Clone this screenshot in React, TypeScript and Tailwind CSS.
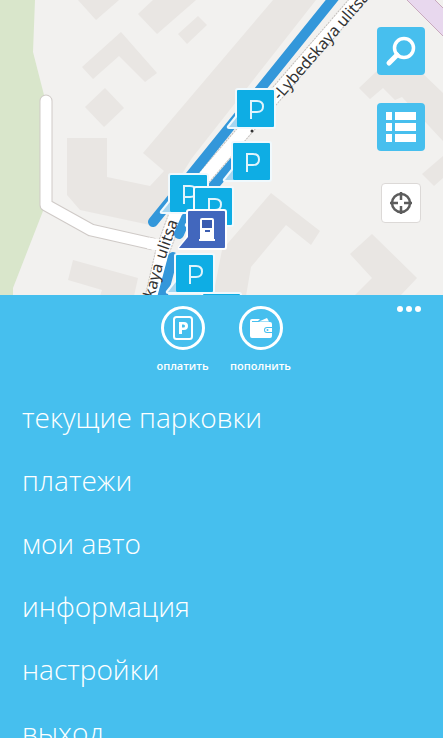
import { ReactNode, useState } from "react";

type Pin = {
  id: number;
  kind: "parking" | "machine";
  left: number;
  top: number;
};

// left/top is the corner of the svg box, the square itself starts 11px in
const PINS: Pin[] = [
  { id: 1, kind: "parking", left: 226, top: 87 },
  { id: 2, kind: "parking", left: 222, top: 140 },
  { id: 3, kind: "parking", left: 159, top: 172 },
  { id: 4, kind: "parking", left: 184, top: 185 },
  { id: 5, kind: "machine", left: 177, top: 208 },
  { id: 6, kind: "parking", left: 165, top: 252 },
  { id: 7, kind: "parking", left: 192, top: 291 },
];

const MENU = [
  { href: "#parkings", label: "текущие парковки" },
  { href: "#payments", label: "платежи" },
  { href: "#cars", label: "мои авто" },
  { href: "#info", label: "информация" },
  { href: "#settings", label: "настройки" },
  { href: "#logout", label: "выход" },
];

const STREET = "M368 -12 L207 174 L188 196 L175 217 L163 250 L151 302";
const LANE = "M46 101 V205 L91 230 L166 247";

function MapCanvas() {
  return (
    <svg className="block h-full w-full" aria-hidden="true">
      <path d="M0 0H35L33 52L44 95V205L43 211L13 288V296H0Z" fill="#d9e6cb" />

      <g fill="#e9e6e3">
        <path d="M78 0L96 20L119 0Z" />
        <path d="M138 14L153 0H196L157 34Z" />
        <path d="M178 34L198 16L207 25L187 44Z" />
        <path d="M82 67L121 32L157 73L145 82L119 56L93 79Z" />
        <path d="M105 88L124 108L104 127L85 107Z" />
        <path d="M67 138H107V177L150 186L164 171L143 153L273 0H316L192 158L150 225L80 210L67 195Z" />
        <path d="M73 260L138 278L134 296H100L102 290L68 280Z" />
        <path d="M271 193L320 231L311 245L286 225L251 267L246 296H213L222 250Z" />
        <path d="M372 234L417 278L400 296H354L372 278L350 254Z" />
        <path d="M422 174L434 186L443 178V156Z" />
        <path d="M359 88L377 71H420L443 93V141L402 97L395 100L383 88L370 99Z" />
      </g>

      <path d="M406 -1L443 36V8L434 -1Z" fill="#e8d8ee" />
      <path d="M406 -1L443 36M434 -1L443 8" fill="none" stroke="#c9a9bd" />

      {/* side lane */}
      <g fill="none" strokeLinecap="round" strokeLinejoin="round">
        <path d={LANE} stroke="#cfcac7" strokeWidth="13" />
        <path d={LANE} stroke="#fff" strokeWidth="11" />
      </g>

      {/* main street */}
      <g fill="none" strokeLinejoin="round">
        <path d={STREET} stroke="#f2f1ef" strokeWidth="22" />
        <path d={STREET} stroke="#c4c0bd" strokeWidth="15" strokeDasharray="2 1" />
        <path d={STREET} stroke="#fff" strokeWidth="13" />
        <path d="M148 243L168 247" stroke="#fff" strokeWidth="11" />
      </g>

      {/* paid parking zones */}
      <g fill="none" stroke="#3397da" strokeWidth="10" strokeLinecap="round" strokeLinejoin="round">
        <path d="M337 -6L195 170L153 222" />
        <path d="M240 155L186 218L179 234" />
        <path d="M173 257L161 302" />
      </g>

      <g fill="#333" fontFamily="'Noto Sans', 'Open Sans', sans-serif" fontSize="16">
        <text transform="translate(280 101) rotate(-49)">-Lybedskaya ulitsa</text>
        <text transform="translate(152 306) rotate(-75)">skaya</text>
        <text transform="translate(165 260) rotate(-71)">ulitsa</text>
        <circle cx="252" cy="131" r="1.5" />
      </g>
    </svg>
  );
}

function MapPin({ pin }: { pin: Pin }) {
  const machine = pin.kind === "machine";

  return (
    <button
      type="button"
      aria-label={machine ? "Паркомат" : "Парковка"}
      className="absolute"
      style={{ left: pin.left, top: pin.top }}
    >
      <svg width="51" height="43" viewBox="0 0 51 43">
        <path
          d="M12 1H47Q50 1 50 4V39Q50 42 47 42H3Q0 42 1 39L9 29V4Q9 1 12 1Z"
          fill={machine ? "#fff" : "#f0f9fd"}
        />
        <path d="M11 30L3 40H11Z" fill={machine ? "#4267bd" : "#a5d6f1"} />
        <rect x="11" y="3" width="37" height="37" rx="1" fill={machine ? "#4267bd" : "#0eade4"} />
        {machine ? (
          <>
            <path d="M11 29L2 40H12Z" fill="#4267bd" />
            <path d="M25 10H35Q37 10 37 12V31H38V33H22V31H23V12Q23 10 25 10Z" fill="#fff" />
            <rect x="25" y="12" width="10" height="8" fill="#3a5cb0" />
            <rect x="28" y="22" width="5" height="2" fill="#3a5cb0" />
          </>
        ) : (
          <path
            d="M25 32V14H31Q37 14 37 19.500Q37 25 31 25H25"
            fill="none"
            stroke="#dff4fc"
            strokeWidth="2"
          />
        )}
      </svg>
    </button>
  );
}

function MapButton({ label, children }: { label: string; children: ReactNode }) {
  return (
    <button
      type="button"
      aria-label={label}
      className="flex size-12 items-center justify-center rounded bg-[#47bfee]"
    >
      {children}
    </button>
  );
}

function RoundAction({ label, children }: { label: string; children: ReactNode }) {
  return (
    <button type="button" className="flex w-[78px] flex-col items-center gap-2">
      <span className="flex size-11 items-center justify-center rounded-full border-[3px] border-white">
        {children}
      </span>
      <span className="text-[11px] leading-4 font-semibold">{label}</span>
    </button>
  );
}

export default function App() {
  const [open, setOpen] = useState(true);

  return (
    <main className="flex h-screen flex-col overflow-hidden bg-[#46bfee] font-['Open_Sans','Noto_Sans',sans-serif] text-white">
      <section className="relative h-[295px] shrink-0 overflow-hidden bg-[#f2f1ef]">
        <MapCanvas />

        {PINS.map((pin) => (
          <MapPin key={pin.id} pin={pin} />
        ))}

        <div className="absolute top-[27px] right-[18px] flex flex-col items-center">
          <MapButton label="Поиск">
            <svg width="32" height="32" viewBox="0 0 32 32" fill="none" stroke="#fff">
              <circle cx="19" cy="13" r="9.500" strokeWidth="3.500" />
              <path d="M12 20L4 28" strokeWidth="5" strokeLinecap="round" />
            </svg>
          </MapButton>
          <div className="mt-7 mb-8">
            <MapButton label="Список">
              <svg width="30" height="30" viewBox="0 0 30 30" fill="#fff">
                <path d="M0 0H6V8H0ZM9 0H30V8H9ZM0 11H6V19H0ZM9 11H30V19H9ZM0 22H6V30H0ZM9 22H30V30H9Z" />
              </svg>
            </MapButton>
          </div>
          <button
            type="button"
            aria-label="Моё местоположение"
            className="flex size-10 items-center justify-center rounded-sm border border-[#dcd9d7] bg-white"
          >
            <svg width="24" height="24" viewBox="0 0 24 24" fill="none" stroke="#5c5c5c" strokeWidth="2.500">
              <circle cx="12" cy="12" r="9" />
              <path d="M12 1V9M12 15V23M1 12H9M15 12H23" />
            </svg>
          </button>
        </div>
      </section>

      <section className="flex min-h-0 flex-1 flex-col">
        <div className="grid grid-cols-[1fr_auto_1fr] items-start pt-[11px]">
          <div className="col-start-2 flex">
            <RoundAction label="оплатить">
              <svg width="20" height="24" viewBox="0 0 20 24">
                <rect x="1" y="1" width="18" height="22" rx="2.500" fill="none" stroke="#fff" strokeWidth="2" />
                <path
                  fillRule="evenodd"
                  fill="#fff"
                  d="M6 6H11Q15 6 15 10Q15 14 11 14H9V18H6ZM9 8.500V11.500H10.500Q12 11.500 12 10Q12 8.500 10.500 8.500Z"
                />
              </svg>
            </RoundAction>
            <RoundAction label="пополнить">
              <svg width="24" height="20" viewBox="0 0 24 20">
                <path
                  fill="#fff"
                  d="M1 3Q1 1 3 1H11L9 3H3V4H21Q23 4 23 6V9H18Q15 9 15 12Q15 15 18 15H23V18Q23 20 21 20H3Q1 20 1 18Z"
                />
                <path d="M10 3.500L18 0L20 3.500Z" fill="#fff" />
                <path d="M18 10H23V14H18Q16 14 16 12Q16 10 18 10Z" fill="#fff" />
                <circle cx="18.500" cy="12" r="1" fill="#46bfee" />
              </svg>
            </RoundAction>
          </div>
          <button
            type="button"
            aria-label="Ещё"
            aria-expanded={open}
            onClick={() => setOpen(!open)}
            className="mr-[22px] flex gap-[3px] justify-self-end"
          >
            <span className="size-1.5 rounded-full bg-white" />
            <span className="size-1.5 rounded-full bg-white" />
            <span className="size-1.5 rounded-full bg-white" />
          </button>
        </div>

        {open ? (
          <nav className="flex flex-col px-[22px] pt-3">
            {MENU.map((item) => (
              <a key={item.href} href={item.href} className="text-[28px] leading-[63px] font-light">
                {item.label}
              </a>
            ))}
          </nav>
        ) : null}
      </section>
    </main>
  );
}
